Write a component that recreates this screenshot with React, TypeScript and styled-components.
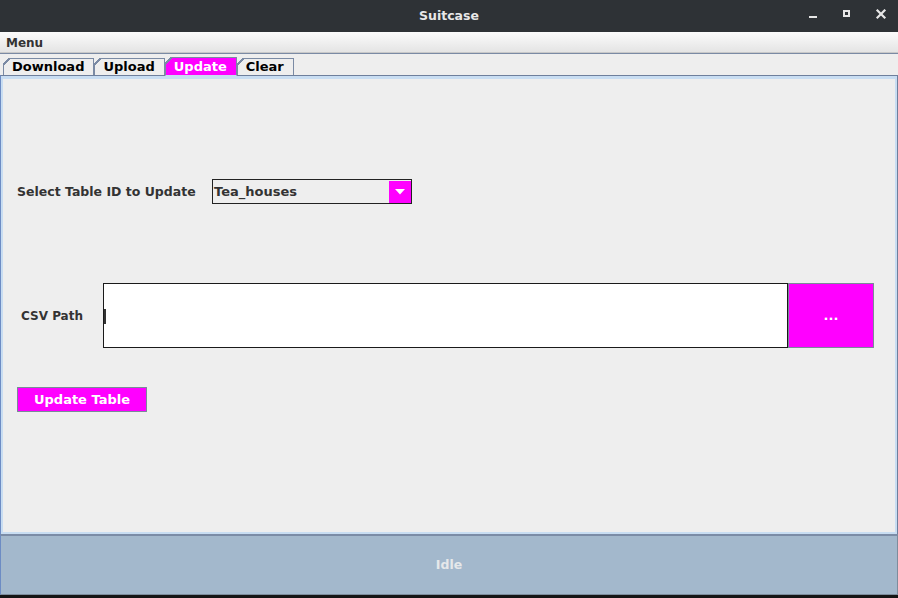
import React from "react";
import styled, { createGlobalStyle } from "styled-components";

const Global = createGlobalStyle`
  html, body { margin: 0; padding: 0; background: #151515; }
  body { font-family: "DejaVu Sans", "Liberation Sans", sans-serif; }
  * { box-sizing: border-box; }
`;

const MAGENTA = "#ff00ff";
const PANEL_BG = "#eeeeee";
const LIGHT_BLUE = "#c8ddf2";
const DARK_EDGE = "#6e7f9c";
const TAB_EDGE = "#7a8aa4";

const Window = styled.div`
  width: 898px;
  height: 598px;
  display: flex;
  flex-direction: column;
  background: ${PANEL_BG};
  overflow: hidden;
`;

const TitleBar = styled.div`
  flex: none;
  height: 32px;
  background: #2e3236;
  display: grid;
  grid-template-columns: 1fr auto 1fr;
  align-items: center;
`;

const Title = styled.div`
  grid-column: 2;
  color: #e8e8e8;
  font-weight: bold;
  font-size: 12.5px;
  margin-top: -2px;
`;

const Controls = styled.div`
  grid-column: 3;
  justify-self: end;
  display: flex;
  gap: 20px;
  padding-right: 10px;
  align-items: center;
`;

const ControlIcon = styled.svg`
  display: block;
  width: 14px;
  height: 14px;
`;

const MenuBar = styled.div`
  flex: none;
  height: 21px;
  background: linear-gradient(#fbfbfb, #e4e4e4);
  border-bottom: 1px solid #c8c8c8;
  display: flex;
  align-items: center;
  padding: 2px 0 0 6px;
`;

const MenuItem = styled.span`
  font-size: 12px;
  font-weight: bold;
  color: #333333;
`;

const TabStrip = styled.div`
  flex: none;
  height: 22px;
  border-top: 1px solid ${TAB_EDGE};
  display: flex;
  align-items: flex-end;
  padding-left: 3px;
`;

const Tab = styled.div<{ $selected?: boolean }>`
  position: relative;
  height: ${(p) => (p.$selected ? 19 : 17)}px;
  padding: 0 9px 1px 8px;
  display: flex;
  align-items: center;
  font-size: 13px;
  font-weight: bold;
  color: ${(p) => (p.$selected ? "#ffffff" : "#000000")};
  background: ${(p) => (p.$selected ? MAGENTA : PANEL_BG)};
  border: 1px solid ${TAB_EDGE};
  border-bottom: ${(p) => (p.$selected ? `1px solid ${LIGHT_BLUE}` : "none")};
  margin-bottom: ${(p) => (p.$selected ? -1 : 0)}px;
  z-index: ${(p) => (p.$selected ? 1 : 0)};

  &::before {
    content: "";
    position: absolute;
    left: -1px;
    top: -1px;
    width: 7px;
    height: 7px;
    background: linear-gradient(
      to bottom right,
      ${PANEL_BG} 0 calc(50% - 0.8px),
      ${TAB_EDGE} calc(50% - 0.8px) calc(50% + 0.8px),
      ${(p) => (p.$selected ? MAGENTA : PANEL_BG)} calc(50% + 0.8px)
    );
  }
`;

const ContentPanel = styled.div`
  flex: 1;
  min-height: 0;
  border-top: 1px solid ${DARK_EDGE};
  border-left: 1px solid #6d8cc4;
  border-right: 1px solid ${DARK_EDGE};
  box-shadow: inset 0 3px 0 ${LIGHT_BLUE}, inset 0 0 0 2px ${LIGHT_BLUE};
  display: flex;
  flex-direction: column;
  padding-top: 103px;
`;

const Row = styled.div<{ $gap?: number; $height: number }>`
  display: flex;
  align-items: center;
  height: ${(p) => p.$height}px;
  margin-top: ${(p) => p.$gap ?? 0}px;
`;

const Label = styled.div<{ $width: number; $center?: boolean; $size?: number }>`
  flex: none;
  width: ${(p) => p.$width}px;
  padding-left: ${(p) => (p.$center ? 0 : 16)}px;
  text-align: ${(p) => (p.$center ? "center" : "left")};
  font-size: ${(p) => p.$size ?? 12}px;
  font-weight: bold;
  color: #333333;
  white-space: nowrap;
`;

const Combo = styled.div`
  width: 200px;
  height: 25px;
  border: 1px solid #222222;
  background: ${PANEL_BG};
  display: flex;
  align-items: stretch;
`;

const ComboText = styled.div`
  flex: 1;
  padding-left: 1px;
  display: flex;
  align-items: center;
  font-size: 13px;
  font-weight: bold;
  color: #333333;
`;

const ComboArrow = styled.div`
  width: 22px;
  margin: 1px 0 0 0;
  background: ${MAGENTA};
  display: flex;
  align-items: center;
  justify-content: center;
`;

const TextField = styled.div`
  flex: none;
  width: 685px;
  height: 65px;
  background: #ffffff;
  border: 1px solid #1a1a1a;
  display: flex;
  align-items: center;
`;

const Caret = styled.div`
  width: 2px;
  height: 15px;
  margin-top: 2px;
  background: #333333;
`;

const MagentaButton = styled.div<{ $width: number; $height: number; $indent?: number }>`
  flex: none;
  width: ${(p) => p.$width}px;
  height: ${(p) => p.$height}px;
  margin-left: ${(p) => p.$indent ?? 0}px;
  background: ${MAGENTA};
  border: 1px solid #7a8a99;
  color: #ffffff;
  font-size: 13px;
  font-weight: bold;
  display: flex;
  align-items: center;
  justify-content: center;
`;

const StatusBar = styled.div`
  flex: none;
  height: 61px;
  background: #a3b8cc;
  border-top: 2px solid #7b8ca6;
  border-left: 1px solid #6d8cc4;
  border-right: 1px solid #7d8c9c;
  border-bottom: 1px solid #7d8c9c;
  padding-bottom: 2px;
  display: flex;
  align-items: center;
  justify-content: center;
  color: #e6e8ea;
  font-size: 12.5px;
  font-weight: bold;
`;

const FrameBottom = styled.div`
  flex: none;
  height: 3px;
  background: #151515;
`;

export default function App() {
  return (
    <>
      <Global />
      <Window>
        <TitleBar>
          <Title>Suitcase</Title>
          <Controls>
            <ControlIcon viewBox="0 0 14 14">
              <rect x="3" y="7" width="8" height="2" fill="#e6e6e6" />
            </ControlIcon>
            <ControlIcon viewBox="0 0 14 14">
              <rect x="4" y="2" width="5" height="5" fill="none" stroke="#e6e6e6" strokeWidth="2" />
            </ControlIcon>
            <ControlIcon viewBox="0 0 14 14">
              <path d="M3.5 1.5 L10.5 8.5 M10.5 1.5 L3.5 8.5" stroke="#e6e6e6" strokeWidth="2.2" strokeLinecap="square" />
            </ControlIcon>
          </Controls>
        </TitleBar>
        <MenuBar>
          <MenuItem>Menu</MenuItem>
        </MenuBar>
        <TabStrip>
          <Tab>Download</Tab>
          <Tab>Upload</Tab>
          <Tab $selected>Update</Tab>
          <Tab>Clear</Tab>
        </TabStrip>
        <ContentPanel>
          <Row $height={25}>
            <Label $width={211} $size={12.5}>Select Table ID to Update</Label>
            <Combo>
              <ComboText>Tea_houses</ComboText>
              <ComboArrow>
                <svg width="10" height="6" viewBox="0 0 10 6">
                  <path d="M0 0 H10 L5 5.5 Z" fill="#ffffff" />
                </svg>
              </ComboArrow>
            </Combo>
          </Row>
          <Row $height={65} $gap={79}>
            <Label $width={102} $center>CSV Path</Label>
            <TextField>
              <Caret />
            </TextField>
            <MagentaButton $width={86} $height={65}>...</MagentaButton>
          </Row>
          <Row $height={25} $gap={39}>
            <MagentaButton $width={130} $height={25} $indent={16}>Update Table</MagentaButton>
          </Row>
        </ContentPanel>
        <StatusBar>Idle</StatusBar>
        <FrameBottom />
      </Window>
    </>
  );
}
